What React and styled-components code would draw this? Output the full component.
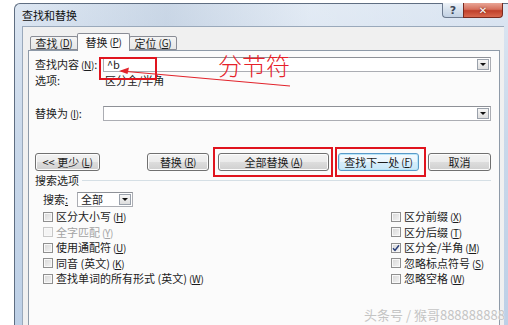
import { styled, createGlobalStyle } from "styled-components";

const GlobalStyle = createGlobalStyle`
  body {
    margin: 0;
    background: #ffffff;
    font-family: "Noto Sans CJK SC", "Noto Sans", sans-serif;
    font-size: 11px;
    color: #1c1c1c;
    overflow: hidden;
  }
`;

const leftOptions = [
  { label: "区分大小写", key: "H" },
  { label: "全字匹配", key: "Y", disabled: true },
  { label: "使用通配符", key: "U" },
  { label: "同音 (英文)", key: "K" },
  { label: "查找单词的所有形式 (英文)", key: "W" },
];

const rightOptions = [
  { label: "区分前缀", key: "X" },
  { label: "区分后缀", key: "T" },
  { label: "区分全/半角", key: "M", checked: true },
  { label: "忽略标点符号", key: "S" },
  { label: "忽略空格", key: "W" },
];

function Accel({ text, k }) {
  return (
    <>
      {text}
      <Paren>
        (<u>{k}</u>)
      </Paren>
    </>
  );
}

export default function App() {
  return (
    <Page>
      <GlobalStyle />
      <Window>
        <TitleBar>
          <Title>查找和替换</Title>
          <CaptionButtons>
            <HelpButton>?</HelpButton>
            <CloseButton>✕</CloseButton>
          </CaptionButtons>
        </TitleBar>
        <Client>
          <TabStrip>
            <Tab>
              <Accel text="查找" k="D" />
            </Tab>
            <Tab $active>
              <Accel text="替换" k="P" />
            </Tab>
            <Tab>
              <Accel text="定位" k="G" />
            </Tab>
          </TabStrip>
          <Panel>
            <FieldRow>
              <Label>
                <Accel text="查找内容" k="N" />:
              </Label>
              <Combo>
                <ComboText>^b</ComboText>
                <DropButton />
              </Combo>
            </FieldRow>
            <FieldRow $tall>
              <Label>选项:</Label>
              <OptionValue>区分全/半角</OptionValue>
            </FieldRow>
            <FieldRow $gap={18}>
              <Label>
                <Accel text="替换为" k="I" />:
              </Label>
              <Combo>
                <ComboText />
                <DropButton />
              </Combo>
            </FieldRow>

            <ButtonRow>
              <Button $w={65}>
                <Accel text="<< 更少" k="L" />
              </Button>
              <ButtonGroup>
                <Button $w={62}>
                  <Accel text="替换" k="R" />
                </Button>
                <Button $w={111}>
                  <Accel text="全部替换" k="A" />
                </Button>
                <Button $w={81} $default>
                  <Accel text="查找下一处" k="F" />
                </Button>
                <Button $w={63}>取消</Button>
              </ButtonGroup>
            </ButtonRow>

            <SectionHeader>
              <span>搜索选项</span>
              <SectionLine />
            </SectionHeader>

            <SearchRow>
              <SearchLabel>
                搜索<u>:</u>
              </SearchLabel>
              <Select>
                <ComboText>全部</ComboText>
                <DropButton />
              </Select>
            </SearchRow>

            <OptionsGrid>
              <OptionColumn>
                {leftOptions.map((o) => (
                  <CheckRow key={o.label} $disabled={o.disabled}>
                    <Box $disabled={o.disabled} />
                    <Accel text={o.label} k={o.key} />
                  </CheckRow>
                ))}
              </OptionColumn>
              <OptionColumn>
                {rightOptions.map((o) => (
                  <CheckRow key={o.label}>
                    <Box>
                      {o.checked && (
                        <svg width="8" height="8" viewBox="0 0 8 8">
                          <path d="M1 4.2 L3 6.4 L7 1.2" fill="none" stroke="#2a3f7a" strokeWidth="1.5" />
                        </svg>
                      )}
                    </Box>
                    <Accel text={o.label} k={o.key} />
                  </CheckRow>
                ))}
              </OptionColumn>
            </OptionsGrid>
          </Panel>
        </Client>
      </Window>

      {/* red annotations drawn over the screenshot */}
      <Mark style={{ left: 99, top: 57, width: 58, height: 23 }} />
      <Mark style={{ left: 213, top: 147, width: 120, height: 30 }} />
      <Mark style={{ left: 335, top: 147, width: 91, height: 30 }} />
      <Annotation>分节符</Annotation>
      <ArrowLayer width="508" height="325" viewBox="0 0 508 325">
        <path d="M121 71 L290 86" stroke="#e2232b" strokeWidth="1.2" fill="none" />
        <path d="M119 71 L129 67.5 L127.5 74 Z" fill="#e2232b" />
      </ArrowLayer>
      <Watermark>头条号 / 猴哥888888888</Watermark>
    </Page>
  );
}

const Page = styled.div`
  position: relative;
  width: 508px;
  height: 325px;
  padding: 3px 0 0 14px;
  box-sizing: border-box;
  overflow: hidden;
`;

const Window = styled.div`
  width: 494px;
  height: 340px;
  box-sizing: border-box;
  border: 1px solid #5f6e82;
  border-right: none;
  border-bottom: none;
  border-radius: 6px 0 0 0;
  background: linear-gradient(180deg, #dce6f2 0%, #c9d8ea 40%, #bccfe6 100%);
  padding: 0 4px 0 7px;
  display: flex;
  flex-direction: column;
`;

const TitleBar = styled.div`
  height: 22px;
  display: flex;
  align-items: flex-start;
  background: linear-gradient(90deg, rgba(255, 255, 255, 0) 0%, rgba(150, 170, 195, 0.25) 30%, rgba(255, 255, 255, 0.2) 60%, rgba(255, 255, 255, 0) 100%);
`;

const Title = styled.div`
  line-height: 22px;
  font-size: 11px;
  color: #111;
`;

const CaptionButtons = styled.div`
  margin-left: auto;
  margin-right: 1px;
  margin-top: -1px;
  display: flex;
`;

const CaptionBase = styled.div`
  height: 15px;
  display: flex;
  align-items: center;
  justify-content: center;
  box-sizing: border-box;
  border: 1px solid #6c7a8e;
  border-top: none;
  font-family: "DejaVu Sans", sans-serif;
  font-weight: bold;
`;

const HelpButton = styled(CaptionBase)`
  width: 21px;
  border-radius: 0 0 0 4px;
  border-right: none;
  background: linear-gradient(180deg, #eef3f8 0%, #d5e0ec 50%, #c2d1e3 100%);
  color: #3c4658;
  font-size: 11px;
`;

const CloseButton = styled(CaptionBase)`
  width: 40px;
  border-radius: 0 0 4px 0;
  border-color: #7a2a1e;
  background: linear-gradient(180deg, #e9a596 0%, #d5705c 45%, #c0402a 55%, #d9684e 100%);
  color: #ffffff;
  font-size: 10px;
  text-shadow: 0 0 2px #5a1a10;
`;

const Client = styled.div`
  flex: 1;
  background: #f0f0f0;
  border: 1px solid #9aa9bb;
  border-right: none;
  border-bottom: none;
  padding: 6px 0 0 5px;
  display: flex;
  flex-direction: column;
`;

const TabStrip = styled.div`
  height: 18px;
  display: flex;
  align-items: flex-end;
  padding-left: 2px;
  margin-bottom: -1px;
  position: relative;
  z-index: 1;
`;

const Tab = styled.div`
  box-sizing: border-box;
  width: ${(p) => (p.$active ? 53 : 48)}px;
  height: ${(p) => (p.$active ? 18 : 14)}px;
  margin-bottom: ${(p) => (p.$active ? 0 : 1)}px;
  border: 1px solid #898c95;
  border-bottom: ${(p) => (p.$active ? "none" : "1px solid #898c95")};
  margin-left: ${(p) => (p.$active ? -1 : 0)}px;
  margin-right: ${(p) => (p.$active ? -1 : 0)}px;
  border-radius: 2px 2px 0 0;
  background: ${(p) => (p.$active ? "#fbfbfb" : "linear-gradient(180deg, #f4f4f4 0%, #e6e6e6 100%)")};
  display: flex;
  align-items: center;
  justify-content: center;
  padding-bottom: ${(p) => (p.$active ? 2 : 0)}px;
  font-size: 11px;
  line-height: 12px;
  white-space: nowrap;
`;

const Paren = styled.span`
  margin-left: 2px;
  font-size: 10px;
  letter-spacing: -0.3px;
`;

const Panel = styled.div`
  width: 472px;
  flex: 1;
  box-sizing: border-box;
  border: 1px solid #8e9aa8;
  border-bottom: none;
  background: #fbfbfb;
  padding: 6px 8px 0 6px;
  display: flex;
  flex-direction: column;
`;

const FieldRow = styled.div`
  display: grid;
  grid-template-columns: 68px 1fr;
  align-items: center;
  height: ${(p) => (p.$tall ? 16 : 15)}px;
  margin-top: ${(p) => p.$gap || 0}px;
`;

const Label = styled.div`
  white-space: nowrap;
  line-height: 15px;
`;

const OptionValue = styled.div`
  padding-left: 2px;
  line-height: 15px;
`;

const Combo = styled.div`
  height: 15px;
  box-sizing: border-box;
  border: 1px solid #abadb3;
  border-top-color: #8e9197;
  background: #ffffff;
  display: flex;
  align-items: center;
  padding-right: 1px;
`;

const ComboText = styled.div`
  flex: 1;
  padding-left: 3px;
  line-height: 13px;
  font-family: "Noto Sans CJK SC", "DejaVu Sans", sans-serif;
`;

const DropButton = styled.div`
  width: 12px;
  height: 11px;
  box-sizing: border-box;
  border: 1px solid #9aa1ab;
  background: linear-gradient(180deg, #f6f6f6 0%, #dedede 100%);
  display: flex;
  align-items: center;
  justify-content: center;

  &::after {
    content: "";
    border-left: 3px solid transparent;
    border-right: 3px solid transparent;
    border-top: 3px solid #111;
  }
`;

const ButtonRow = styled.div`
  display: flex;
  margin-top: 32px;
  height: 18px;
`;

const ButtonGroup = styled.div`
  display: flex;
  gap: 9px;
  margin-left: auto;
`;

const Button = styled.div`
  width: ${(p) => p.$w}px;
  height: 18px;
  box-sizing: border-box;
  border: 1px solid ${(p) => (p.$default ? "#5a9ac8" : "#707070")};
  border-radius: 3px;
  background: ${(p) =>
    p.$default
      ? "linear-gradient(180deg, #f4fafe 0%, #e8f5fd 50%, #d6eefb 51%, #c9e7f8 100%)"
      : "linear-gradient(180deg, #f2f2f2 0%, #ebebeb 50%, #dddddd 51%, #cfcfcf 100%)"};
  box-shadow: inset 0 0 0 1px ${(p) => (p.$default ? "#b9e6f9" : "#fcfcfc")};
  display: flex;
  align-items: center;
  justify-content: center;
  white-space: nowrap;
  line-height: 12px;
  font-size: 11px;
`;

const SectionHeader = styled.div`
  display: flex;
  align-items: center;
  height: 14px;
  margin-top: 2px;
  line-height: 14px;
`;

const SectionLine = styled.div`
  flex: 1;
  height: 1px;
  margin-left: 3px;
  background: #d5dfe5;
`;

const SearchRow = styled.div`
  display: flex;
  align-items: center;
  padding-left: 8px;
  margin-top: 5px;
  height: 15px;
`;

const SearchLabel = styled.div`
  width: 34px;
  line-height: 15px;
`;

const Select = styled(Combo)`
  width: 56px;
`;

const OptionsGrid = styled.div`
  display: grid;
  grid-template-columns: 348px auto;
  padding-left: 8px;
  margin-top: 2px;
`;

const OptionColumn = styled.div`
  display: flex;
  flex-direction: column;
`;

const CheckRow = styled.div`
  height: 15.5px;
  display: flex;
  align-items: center;
  white-space: nowrap;
  line-height: 15px;
  color: ${(p) => (p.$disabled ? "#a3a3a3" : "#1c1c1c")};
`;

const Box = styled.div`
  width: 10px;
  height: 10px;
  box-sizing: border-box;
  margin-right: 3px;
  border: 1px solid ${(p) => (p.$disabled ? "#c8c8c8" : "#8f8f8f")};
  background: ${(p) => (p.$disabled ? "#f4f4f4" : "linear-gradient(135deg, #d6d6d6 0%, #f4f4f4 100%)")};
  box-shadow: inset 0 0 0 1px #f8f8f8;
  display: flex;
  align-items: center;
  justify-content: center;
`;

const Mark = styled.div`
  position: absolute;
  box-sizing: border-box;
  border: 2px solid #e0141e;
  pointer-events: none;
`;

const Annotation = styled.div`
  position: absolute;
  left: 218px;
  top: 50px;
  font-size: 24px;
  line-height: 30px;
  color: #e62129;
  font-family: "Noto Sans CJK SC", sans-serif;
  font-weight: 300;
`;

const ArrowLayer = styled.svg`
  position: absolute;
  left: 0;
  top: 0;
  pointer-events: none;
`;

const Watermark = styled.div`
  position: absolute;
  left: 364px;
  top: 306px;
  font-size: 13px;
  line-height: 18px;
  color: #c4c4c4;
  white-space: nowrap;
  text-shadow: 0 0 1px #ffffff;
`;
